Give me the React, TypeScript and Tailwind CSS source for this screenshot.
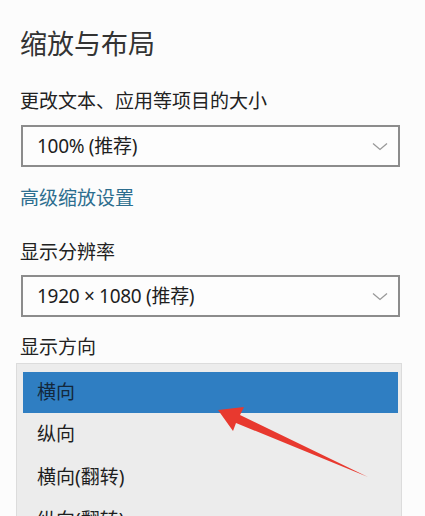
import React from "react";

const font = { fontFamily: '"Noto Sans", "Noto Sans CJK SC", sans-serif' };

function Chevron() {
  return (
    <svg width="16" height="9" viewBox="0 0 16 9" className="shrink-0 mr-[2px]">
      <path d="M1 1.5 L8 7.5 L15 1.5" fill="none" stroke="#999" strokeWidth="1.3" />
    </svg>
  );
}

function Select({ value }: { value: string }) {
  return (
    <div className="ml-px w-[379px] h-[42px] border-2 border-[#8c8c8c] bg-[#fdfdfd] flex items-center justify-between pl-[14px] pr-[8px]">
      <span className="text-[19px] text-[#1e1e1e] leading-none tracking-[-0.3px]">{value}</span>
      <Chevron />
    </div>
  );
}

export default function App() {
  return (
    <div
      className="relative w-[425px] h-[516px] overflow-hidden bg-[#fcfcfc] pl-[20px] pt-[26px]"
      style={font}
    >
      <div className="text-[27px] leading-[36px] text-[#333]">缩放与布局</div>
      <div className="mt-[26px] text-[19px] leading-[26px] text-[#222]">更改文本、应用等项目的大小</div>
      <div className="mt-[11px]">
        <Select value="100% (推荐)" />
      </div>
      <div className="mt-[18px] text-[19px] leading-[26px] text-[#2d6e8f]">高级缩放设置</div>
      <div className="mt-[28px] text-[19px] leading-[26px] text-[#222]">显示分辨率</div>
      <div className="mt-[10px]">
        <Select value="1920 × 1080 (推荐)" />
      </div>
      <div className="mt-[17px] text-[19px] leading-[26px] text-[#222]">显示方向</div>
      <div className="mt-[3px] -ml-[4px] w-[386px] border border-[#dcdcdc] bg-[#ececec] pt-[8px] pl-[6px] pr-[3px]">
        <div className="h-[41px] bg-[#2f7ec2] flex items-center pl-[14px] text-[19px] text-[#13283c]">横向</div>
        <div className="h-[43px] flex items-center pl-[14px] text-[19px] text-[#1e1e1e]">纵向</div>
        <div className="h-[43px] flex items-center pl-[14px] text-[19px] text-[#1e1e1e]">横向(翻转)</div>
        <div className="h-[43px] flex items-center pl-[14px] text-[19px] text-[#1e1e1e]">纵向(翻转)</div>
      </div>
      <svg
        className="absolute left-0 top-0 pointer-events-none"
        width="425"
        height="516"
        viewBox="0 0 425 516"
      >
        <polygon
          points="218,410 244,407 240,415 368,477 236,423 233,431"
          fill="#e8392f"
        />
      </svg>
    </div>
  );
}
